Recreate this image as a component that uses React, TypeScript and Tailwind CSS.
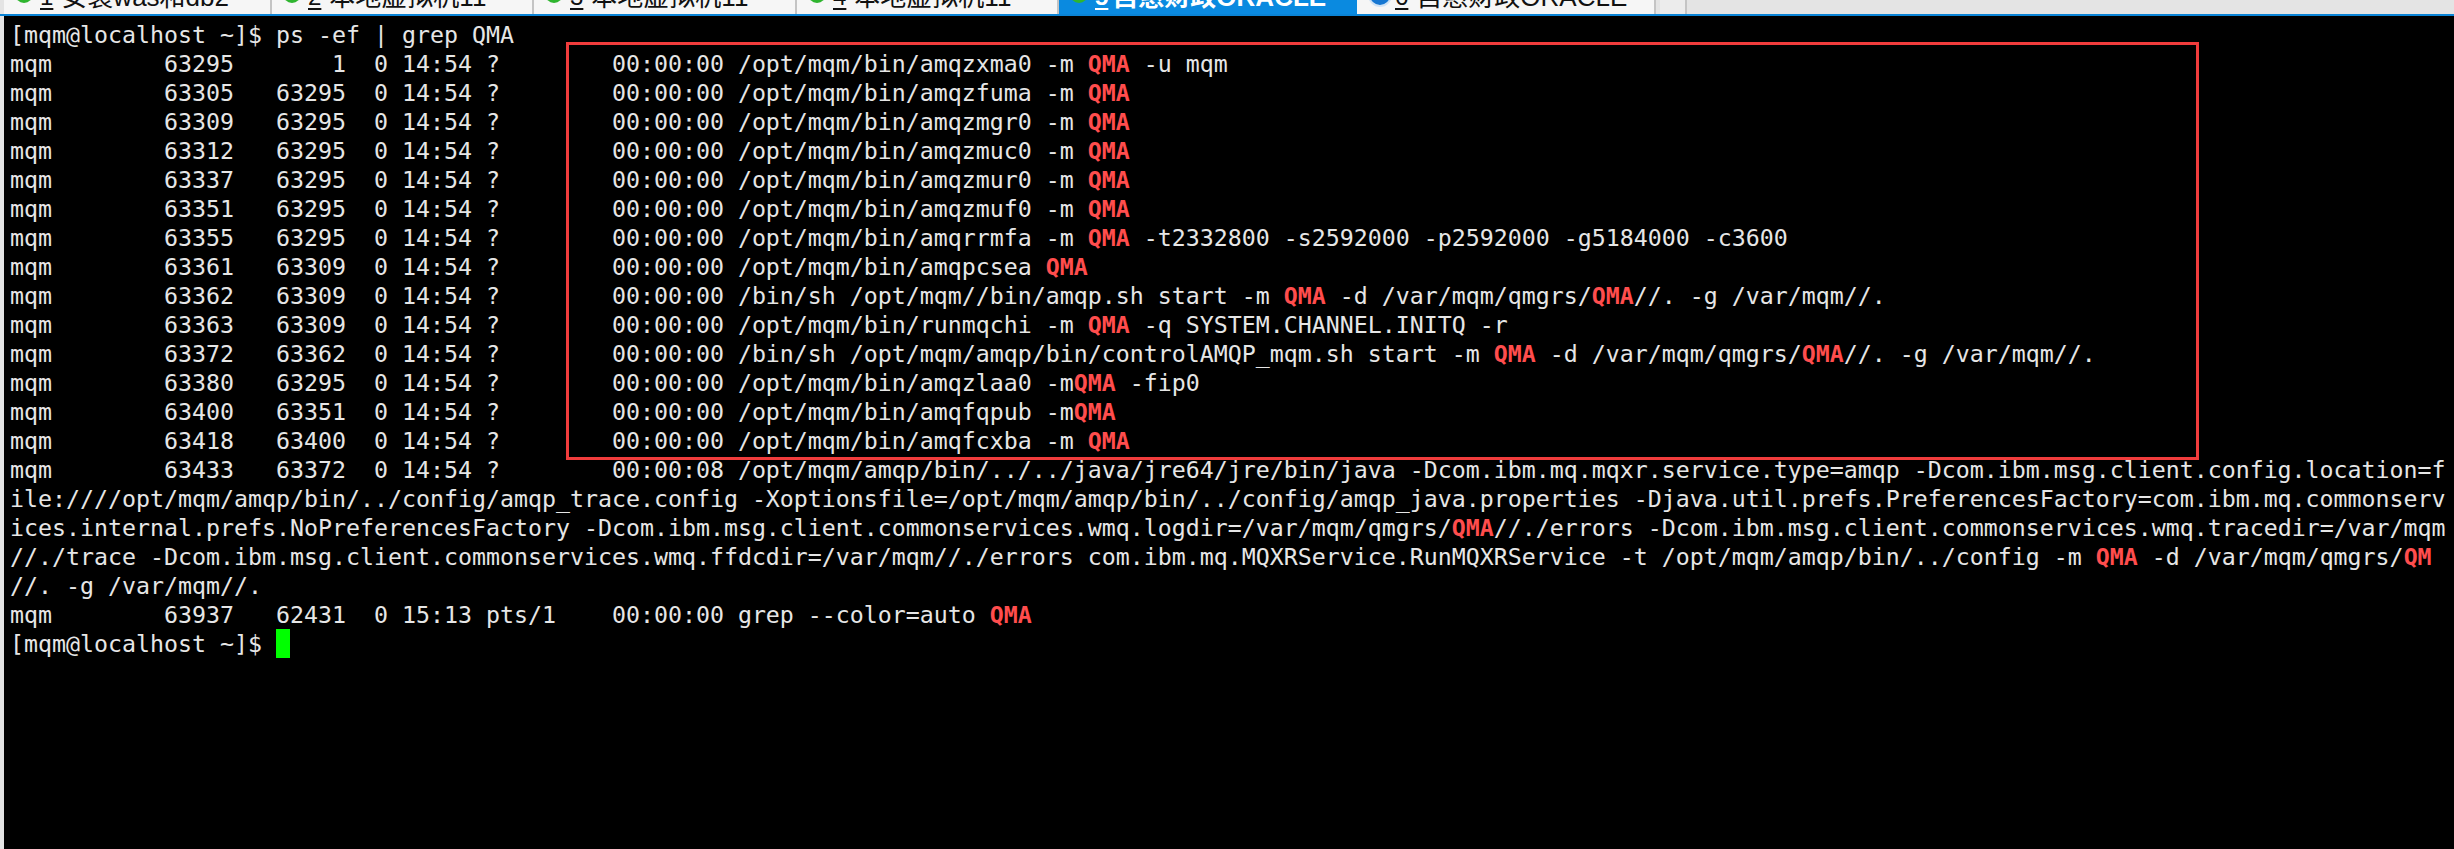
const PROMPT = "[mqm@localhost ~]$ ";

const row = (pid: string, ppid: string, rest: string, time = "14:54", tty = "?       ", cpu = "00:00:00") =>
  `mqm        ${pid}   ${ppid}  0 ${time} ${tty} ${cpu} ${rest}`;

const lines: string[] = [
  row("63295", "    1", "/opt/mqm/bin/amqzxma0 -m QMA -u mqm"),
  row("63305", "63295", "/opt/mqm/bin/amqzfuma -m QMA"),
  row("63309", "63295", "/opt/mqm/bin/amqzmgr0 -m QMA"),
  row("63312", "63295", "/opt/mqm/bin/amqzmuc0 -m QMA"),
  row("63337", "63295", "/opt/mqm/bin/amqzmur0 -m QMA"),
  row("63351", "63295", "/opt/mqm/bin/amqzmuf0 -m QMA"),
  row("63355", "63295", "/opt/mqm/bin/amqrrmfa -m QMA -t2332800 -s2592000 -p2592000 -g5184000 -c3600"),
  row("63361", "63309", "/opt/mqm/bin/amqpcsea QMA"),
  row("63362", "63309", "/bin/sh /opt/mqm//bin/amqp.sh start -m QMA -d /var/mqm/qmgrs/QMA//. -g /var/mqm//."),
  row("63363", "63309", "/opt/mqm/bin/runmqchi -m QMA -q SYSTEM.CHANNEL.INITQ -r"),
  row("63372", "63362", "/bin/sh /opt/mqm/amqp/bin/controlAMQP_mqm.sh start -m QMA -d /var/mqm/qmgrs/QMA//. -g /var/mqm//."),
  row("63380", "63295", "/opt/mqm/bin/amqzlaa0 -mQMA -fip0"),
  row("63400", "63351", "/opt/mqm/bin/amqfqpub -mQMA"),
  row("63418", "63400", "/opt/mqm/bin/amqfcxba -m QMA"),
  row("63433", "63372", "/opt/mqm/amqp/bin/../../java/jre64/jre/bin/java -Dcom.ibm.mq.mqxr.service.type=amqp -Dcom.ibm.msg.client.config.location=f", "14:54", "?       ", "00:00:08"),
  "ile:////opt/mqm/amqp/bin/../config/amqp_trace.config -Xoptionsfile=/opt/mqm/amqp/bin/../config/amqp_java.properties -Djava.util.prefs.PreferencesFactory=com.ibm.mq.commonserv",
  "ices.internal.prefs.NoPreferencesFactory -Dcom.ibm.msg.client.commonservices.wmq.logdir=/var/mqm/qmgrs/QMA//./errors -Dcom.ibm.msg.client.commonservices.wmq.tracedir=/var/mqm",
  "//./trace -Dcom.ibm.msg.client.commonservices.wmq.ffdcdir=/var/mqm//./errors com.ibm.mq.MQXRService.RunMQXRService -t /opt/mqm/amqp/bin/../config -m QMA -d /var/mqm/qmgrs/QM",
  "//. -g /var/mqm//.",
  row("63937", "62431", "grep --color=auto QMA", "15:13", "pts/1   ", "00:00:00"),
];

function Line({ text }: { text: string }) {
  const parts = text.split(/(QMA|QM$)/);
  return (
    <div className="h-[29px] leading-[29px] whitespace-pre">
      {parts.map((p, i) =>
        i % 2 === 1 ? (
          <span key={i} className="font-bold text-[#ff4d4d]">
            {p}
          </span>
        ) : (
          <span key={i}>{p}</span>
        )
      )}
    </div>
  );
}

type TabInfo = { n: string; label: string; w: string; active?: boolean; blue?: boolean };

const tabs: TabInfo[] = [
  { n: "1", label: "安装was和db2", w: "w-[268px]" },
  { n: "2", label: "本地虚拟机11", w: "w-[262px]" },
  { n: "3", label: "本地虚拟机11", w: "w-[263px]" },
  { n: "4", label: "本地虚拟机11", w: "w-[262px]" },
  { n: "5", label: "自悬财政ORACLE", w: "w-[298px]", active: true },
  { n: "6", label: "自悬财政ORACLE", w: "w-[299px]", blue: true },
];

function Tab({ t }: { t: TabInfo }) {
  return (
    <div
      className={`${t.w} h-[14px] shrink-0 overflow-hidden border-r-2 ${
        t.active ? "bg-[#0a8ae0] border-[#0a8ae0] text-white font-bold" : "bg-[#f6f6f6] border-[#c4c4c4] text-[#111111]"
      }`}
    >
      <div className="flex items-center h-[34px] -mt-[20px] pl-[11px] text-[24px] leading-[34px] whitespace-nowrap">
        {t.blue ? (
          <span className="w-[24px] h-[24px] rounded-full bg-[#1677d2] border-2 border-[#cfe2f5] shrink-0 mt-[-4px]" />
        ) : (
          <span className="w-[18px] h-[18px] rounded-full bg-[#2fb52f] shrink-0 mt-[-6px]" />
        )}
        <span className={`${t.blue ? "ml-[3px]" : "ml-[7px]"} underline underline-offset-[3px]`}>{t.n}</span>
        <span className={`${t.active ? "ml-[4px]" : "ml-[8px]"} text-[26px]`}>{t.label}</span>
      </div>
    </div>
  );
}

export default function App() {
  return (
    <div
      className="relative w-[2454px] h-[849px] overflow-hidden bg-black"
      style={{ fontFamily: '"DejaVu Sans Mono", monospace' }}
    >
      <div
        className="flex h-[14px] pl-[4px] bg-[#e4e4e4] overflow-hidden"
        style={{ fontFamily: '"Liberation Sans", "Noto Sans CJK SC", sans-serif' }}
      >
        {tabs.map((t) => (
          <Tab key={t.n} t={t} />
        ))}
        <div className="w-[4px] h-[14px] shrink-0 bg-[#e4e4e4]" />
        <div className="w-[27px] h-[14px] shrink-0 bg-[#ececec] border-r-2 border-[#c4c4c4]" />
      </div>
      <div className="h-[2px] bg-[#0a84d6]" />
      <div className="flex h-[833px]">
        <div className="w-[4px] shrink-0 bg-[#e4e4e4]" />
        <div className="flex-1 pt-[4px] pl-[6px] text-[23.25px] text-[#e6e6e6] bg-black">
          <div className="h-[29px] leading-[29px] whitespace-pre">{PROMPT}ps -ef | grep QMA</div>
          {lines.map((l, i) => (
            <Line key={i} text={l} />
          ))}
          <div className="flex h-[29px] leading-[29px] whitespace-pre">
            <span>{PROMPT}</span>
            <span className="w-[14px] h-[29px] bg-[#00ff00]" />
          </div>
        </div>
      </div>
      <div className="absolute left-[566px] top-[42px] w-[1633px] h-[418px] border-[3px] border-[#f03c3c]" />
    </div>
  );
}
